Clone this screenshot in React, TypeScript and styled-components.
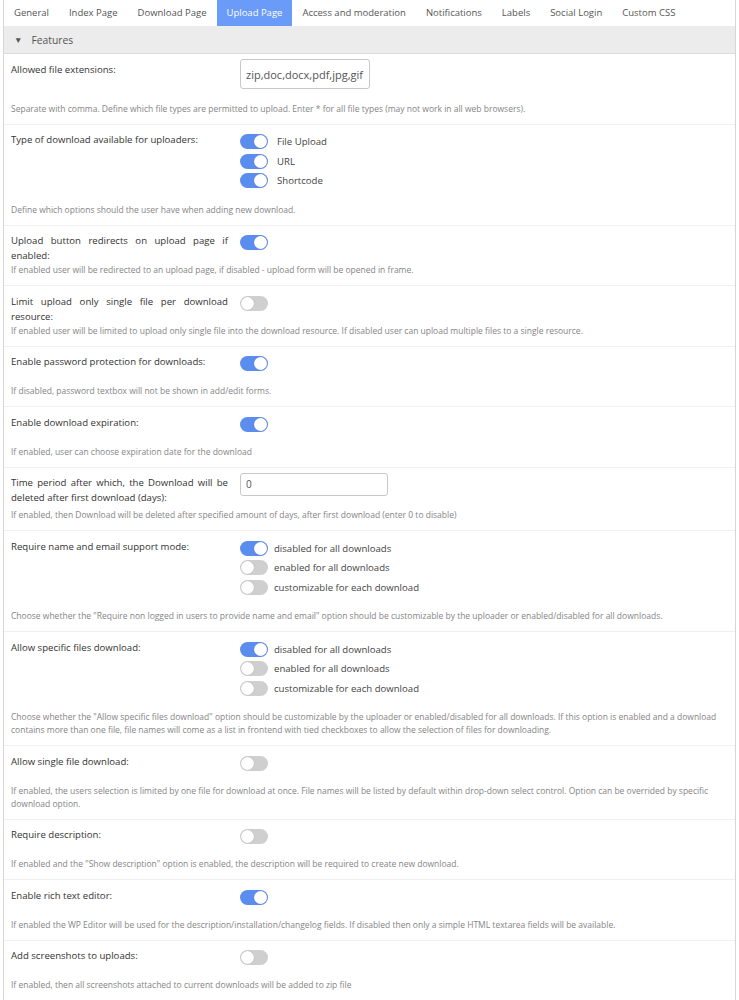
import styled, { createGlobalStyle } from 'styled-components'

const GlobalStyle = createGlobalStyle`
	body {
		margin: 0;
		background: #ffffff;
		font-family: 'Open Sans', 'Noto Sans', sans-serif;
	}
`

const tabs = [
	'General',
	'Index Page',
	'Download Page',
	'Upload Page',
	'Access and moderation',
	'Notifications',
	'Labels',
	'Social Login',
	'Custom CSS',
]

type Option = { label: string; on: boolean }

type Setting = {
	label: string
	help: string
	kind: 'toggle' | 'group' | 'input'
	on?: boolean
	options?: Option[]
	gap?: number
	value?: string
	width?: number
	height?: number
	fontSize?: number
}

const modeOptions = (first: boolean): Option[] => [
	{ label: 'disabled for all downloads', on: first },
	{ label: 'enabled for all downloads', on: false },
	{ label: 'customizable for each download', on: false },
]

const settings: Setting[] = [
	{
		label: 'Allowed file extensions:',
		kind: 'input',
		value: 'zip,doc,docx,pdf,jpg,gif',
		width: 130,
		height: 30,
		fontSize: 11,
		help: 'Separate with comma. Define which file types are permitted to upload. Enter * for all file types (may not work in all web browsers).',
	},
	{
		label: 'Type of download available for uploaders:',
		kind: 'group',
		gap: 9,
		options: [
			{ label: 'File Upload', on: true },
			{ label: 'URL', on: true },
			{ label: 'Shortcode', on: true },
		],
		help: 'Define which options should the user have when adding new download.',
	},
	{
		label: 'Upload button redirects on upload page if enabled:',
		kind: 'toggle',
		on: true,
		help: 'If enabled user will be redirected to an upload page, if disabled - upload form will be opened in frame.',
	},
	{
		label: 'Limit upload only single file per download resource:',
		kind: 'toggle',
		on: false,
		help: 'If enabled user will be limited to upload only single file into the download resource. If disabled user can upload multiple files to a single resource.',
	},
	{
		label: 'Enable password protection for downloads:',
		kind: 'toggle',
		on: true,
		help: 'If disabled, password textbox will not be shown in add/edit forms.',
	},
	{
		label: 'Enable download expiration:',
		kind: 'toggle',
		on: true,
		help: 'If enabled, user can choose expiration date for the download',
	},
	{
		label: 'Time period after which, the Download will be deleted after first download (days):',
		kind: 'input',
		value: '0',
		width: 148,
		height: 23,
		fontSize: 10,
		help: 'If enabled, then Download will be deleted after specified amount of days, after first download (enter 0 to disable)',
	},
	{
		label: 'Require name and email support mode:',
		kind: 'group',
		gap: 6,
		options: modeOptions(true),
		help: 'Choose whether the "Require non logged in users to provide name and email" option should be customizable by the uploader or enabled/disabled for all downloads.',
	},
	{
		label: 'Allow specific files download:',
		kind: 'group',
		gap: 6,
		options: modeOptions(true),
		help: 'Choose whether the "Allow specific files download" option should be customizable by the uploader or enabled/disabled for all downloads. If this option is enabled and a download contains more than one file, file names will come as a list in frontend with tied checkboxes to allow the selection of files for downloading.',
	},
	{
		label: 'Allow single file download:',
		kind: 'toggle',
		on: false,
		help: 'If enabled, the users selection is limited by one file for download at once. File names will be listed by default within drop-down select control. Option can be overrided by specific download option.',
	},
	{
		label: 'Require description:',
		kind: 'toggle',
		on: false,
		help: 'If enabled and the "Show description" option is enabled, the description will be required to create new download.',
	},
	{
		label: 'Enable rich text editor:',
		kind: 'toggle',
		on: true,
		help: 'If enabled the WP Editor will be used for the description/installation/changelog fields. If disabled then only a simple HTML textarea fields will be available.',
	},
	{
		label: 'Add screenshots to uploads:',
		kind: 'toggle',
		on: false,
		help: 'If enabled, then all screenshots attached to current downloads will be added to zip file',
	},
]

function Control({ setting }: { setting: Setting }) {
	if (setting.kind === 'input') {
		return (
			<TextInput
				$w={setting.width ?? 130}
				$h={setting.height ?? 24}
				$fs={setting.fontSize ?? 10}
				defaultValue={setting.value}
			/>
		)
	}
	if (setting.kind === 'group') {
		return (
			<Group>
				{setting.options?.map((o) => (
					<OptionRow key={o.label} $gap={setting.gap ?? 6}>
						<Switch $on={o.on} />
						<OptionText>{o.label}</OptionText>
					</OptionRow>
				))}
			</Group>
		)
	}
	return (
		<OptionRow $gap={0}>
			<Switch $on={!!setting.on} />
		</OptionRow>
	)
}

export default function App() {
	return (
		<>
			<GlobalStyle />
			<Panel>
				<TabBar>
					{tabs.map((t) => (
						<Tab key={t} $active={t === 'Upload Page'}>
							{t}
						</Tab>
					))}
				</TabBar>
				<SectionHeader>
					<Caret>▼</Caret>
					Features
				</SectionHeader>
				{settings.map((s) => (
					<Row key={s.label}>
						<Top>
							<Label>{s.label}</Label>
							<Control setting={s} />
						</Top>
						<Help>{s.help}</Help>
					</Row>
				))}
			</Panel>
		</>
	)
}

const Panel = styled.div`
	margin-left: 3px;
	width: 731px;
	border-left: 1px solid #d6d6d6;
	border-right: 1px solid #d6d6d6;
	background: #ffffff;
`
const TabBar = styled.div`
	display: flex;
	height: 26px;
	background: #ffffff;
`
const Tab = styled.div<{ $active: boolean }>`
	padding: 0 10px;
	line-height: 25px;
	font-size: 9.5px;
	color: ${(p) => (p.$active ? '#ffffff' : '#555555')};
	background: ${(p) => (p.$active ? '#6a9bf8' : 'transparent')};
	white-space: nowrap;
`
const SectionHeader = styled.div`
	display: flex;
	align-items: center;
	height: 28px;
	padding-left: 10px;
	background: #ececec;
	border-bottom: 1px solid #dcdcdc;
	font-size: 10.3px;
	color: #555555;
	box-sizing: border-box;
`
const Caret = styled.span`
	font-size: 8.5px;
	color: #555555;
	margin-right: 9px;
`
const Row = styled.div`
	padding: 7.5px 7px 9px;
	border-bottom: 1px solid #f0f0f0;
`
const Top = styled.div`
	display: grid;
	grid-template-columns: 217px 1fr;
	column-gap: 12px;
	align-items: start;
	min-height: 30px;
`
const Label = styled.div`
	font-size: 9.6px;
	line-height: 15px;
	color: #333333;
	text-align: justify;
`
const Group = styled.div`
	display: flex;
	flex-direction: column;
	padding-bottom: 12px;
`
const OptionRow = styled.div<{ $gap: number }>`
	display: flex;
	align-items: center;
	gap: ${(p) => p.$gap}px;
	height: 19.5px;
`
const OptionText = styled.span`
	font-size: 9.6px;
	color: #444444;
	white-space: nowrap;
`
const Switch = styled.span<{ $on: boolean }>`
	position: relative;
	flex: none;
	width: 28px;
	height: 15px;
	border-radius: 8px;
	background: ${(p) => (p.$on ? '#5b8def' : '#cfcfcf')};
	&::after {
		content: '';
		position: absolute;
		top: 1px;
		left: ${(p) => (p.$on ? '14px' : '1px')};
		width: 13px;
		height: 13px;
		border-radius: 50%;
		background: #ffffff;
		box-shadow: 0 0 1px rgba(0, 0, 0, 0.25);
	}
`
const TextInput = styled.input<{ $w: number; $h: number; $fs: number }>`
	width: ${(p) => p.$w}px;
	height: ${(p) => p.$h}px;
	margin: -2.5px 0 12.5px;
	padding: 0 5px;
	box-sizing: border-box;
	border: 1px solid #c8c8c8;
	border-radius: 3px;
	font-family: 'Open Sans', sans-serif;
	font-size: ${(p) => p.$fs}px;
	color: #555555;
	background: #ffffff;
	outline: none;
`
const Help = styled.div`
	font-size: 8.5px;
	line-height: 13px;
	color: #858585;
`
